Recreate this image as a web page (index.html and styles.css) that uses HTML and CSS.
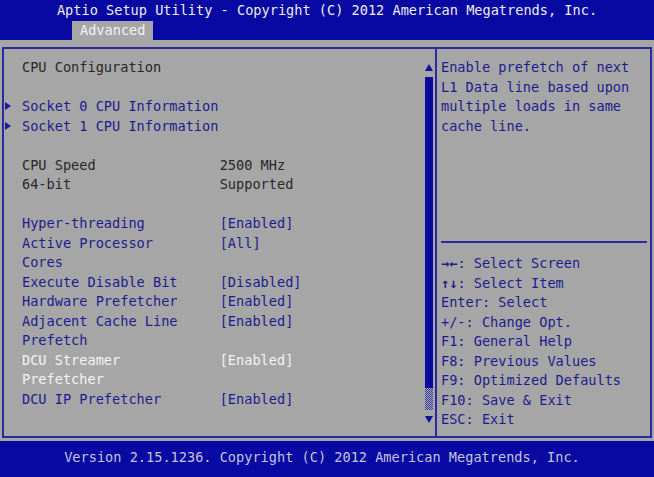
FILE: index.html
```html
<!DOCTYPE html>
<html lang="en">
<head>
  <meta charset="UTF-8">
  <meta name="viewport" content="width=device-width, initial-scale=1.0">
  <title>Aptio Setup Utility</title>
  <link rel="stylesheet" href="styles.css">
</head>
<body>

  <div class="screen">
    <header class="topbar">
      <div class="title">Aptio Setup Utility - Copyright (C) 2012 American Megatrends, Inc.</div>
      <nav class="tabs"><span class="tab">Advanced</span></nav>
    </header>

    <main class="main">
      <div class="frame">
        <section class="settings">
          <div class="list">
            <div class="group">
              <div class="row heading">CPU Configuration</div>
            </div>
            <div class="group">
              <div class="row submenu">Socket 0 CPU Information</div>
              <div class="row submenu">Socket 1 CPU Information</div>
            </div>
            <div class="group">
              <div class="row info"><span class="label">CPU Speed</span><span class="value">2500 MHz</span></div>
              <div class="row info"><span class="label">64-bit</span><span class="value">Supported</span></div>
            </div>
            <div class="group">
              <div class="row option"><span class="label">Hyper-threading</span><span class="value">[Enabled]</span></div>
              <div class="row option"><span class="label">Active Processor Cores</span><span class="value">[All]</span></div>
              <div class="row option"><span class="label">Execute Disable Bit</span><span class="value">[Disabled]</span></div>
              <div class="row option"><span class="label">Hardware Prefetcher</span><span class="value">[Enabled]</span></div>
              <div class="row option"><span class="label">Adjacent Cache Line Prefetch</span><span class="value">[Enabled]</span></div>
              <div class="row option selected"><span class="label">DCU Streamer Prefetcher</span><span class="value">[Enabled]</span></div>
              <div class="row option"><span class="label">DCU IP Prefetcher</span><span class="value">[Enabled]</span></div>
            </div>
          </div>
          <div class="scrollbar">
            <span class="arrow-up"></span>
            <span class="thumb"></span>
            <span class="track"></span>
            <span class="arrow-down"></span>
          </div>
        </section>

        <aside class="help">
          <div class="help-box">
            <p class="help-text">Enable prefetch of next L1 Data line based upon multiple loads in same cache line.</p>
          </div>
          <ul class="keys">
            <li><b>→←</b>: Select Screen</li>
            <li><b>↑↓</b>: Select Item</li>
            <li>Enter: Select</li>
            <li>+/-: Change Opt.</li>
            <li>F1: General Help</li>
            <li>F8: Previous Values</li>
            <li>F9: Optimized Defaults</li>
            <li>F10: Save &amp; Exit</li>
            <li>ESC: Exit</li>
          </ul>
        </aside>
      </div>
    </main>

    <footer class="footer">Version 2.15.1236. Copyright (C) 2012 American Megatrends, Inc.</footer>
  </div>

</body>
</html>
```

FILE: styles.css
```css
body {
  margin: 0;
  font-family: 'DejaVu Sans Mono', 'Liberation Mono', monospace;
  font-size: 13.6px;
  line-height: 19.5px;
  background-color: #0808a2;
}

.screen {
  width: 654px;
  height: 477px;
  display: flex;
  flex-direction: column;
  overflow: hidden;
}

/* top bar */
.topbar {
  height: 40px;
  background-color: #0808a2;
}

.title {
  height: 21px;
  line-height: 21px;
  text-align: center;
  color: #ececec;
}

.tabs {
  height: 19px;
  padding-left: 72px;
}

.tab {
  display: inline-block;
  height: 19px;
  line-height: 19px;
  padding: 0 8px;
  background-color: #a6a6a6;
  color: #f2f2f2;
}

/* main area */
.main {
  height: 401px;
  padding: 7px 2px 3px 2px;
  box-sizing: border-box;
  background-color: #a6a6a6;
}

.frame {
  display: flex;
  height: 391px;
  box-sizing: border-box;
  border: 2px solid #2a2a9e;
}

.settings {
  width: 431px;
  display: flex;
}

.list {
  flex: 1;
  padding: 9px 0 0 18px;
}

.group {
  margin-bottom: 19.5px;
}

.row {
  display: flex;
  color: #1c1c8e;
}

.row .label {
  width: 20ch;
  margin-right: 34px;
}

.heading,
.info {
  color: #282828;
}

.submenu::before {
  content: '';
  display: inline-block;
  margin: 5px 11px 0 -17px;
  width: 0;
  height: 0;
  border-left: 6px solid #1c1c9e;
  border-top: 4px solid transparent;
  border-bottom: 4px solid transparent;
}

.selected {
  color: #f4f4f4;
}

/* scrollbar */
.scrollbar {
  width: 10px;
  margin-right: 1px;
  padding-top: 15px;
  display: flex;
  flex-direction: column;
  align-items: center;
}

.arrow-up,
.arrow-down {
  width: 0;
  height: 0;
  border-left: 4px solid transparent;
  border-right: 4px solid transparent;
}

.arrow-up {
  border-bottom: 7px solid #1010a0;
  margin-bottom: 6px;
}

.arrow-down {
  border-top: 7px solid #1010a0;
  margin-top: 6px;
}

.thumb {
  width: 8px;
  height: 311px;
  background-color: #0a0aa0;
}

.track {
  width: 8px;
  height: 22px;
  background: repeating-conic-gradient(#3a3aa8 0 25%, #a6a6a6 0 50%) 0 0 / 2px 2px;
}

/* help panel */
.help {
  flex: 1;
  border-left: 2px solid #2a2a9e;
  padding: 0 3px 0 4px;
  display: flex;
  flex-direction: column;
}

.help-box {
  height: 194px;
  border-bottom: 2px solid #2a2a9e;
  padding-top: 9px;
  box-sizing: border-box;
}

.help-text {
  margin: 0;
  width: 25ch;
  color: #1c1c8e;
}

.keys {
  list-style: none;
  margin: 0;
  padding: 11px 0 0 0;
  color: #1c1c8e;
}

/* footer */
.footer {
  flex: 1;
  padding: 7px 10px 0 0;
  text-align: center;
  color: #c4c4dc;
  background-color: #0808a2;
}
```
